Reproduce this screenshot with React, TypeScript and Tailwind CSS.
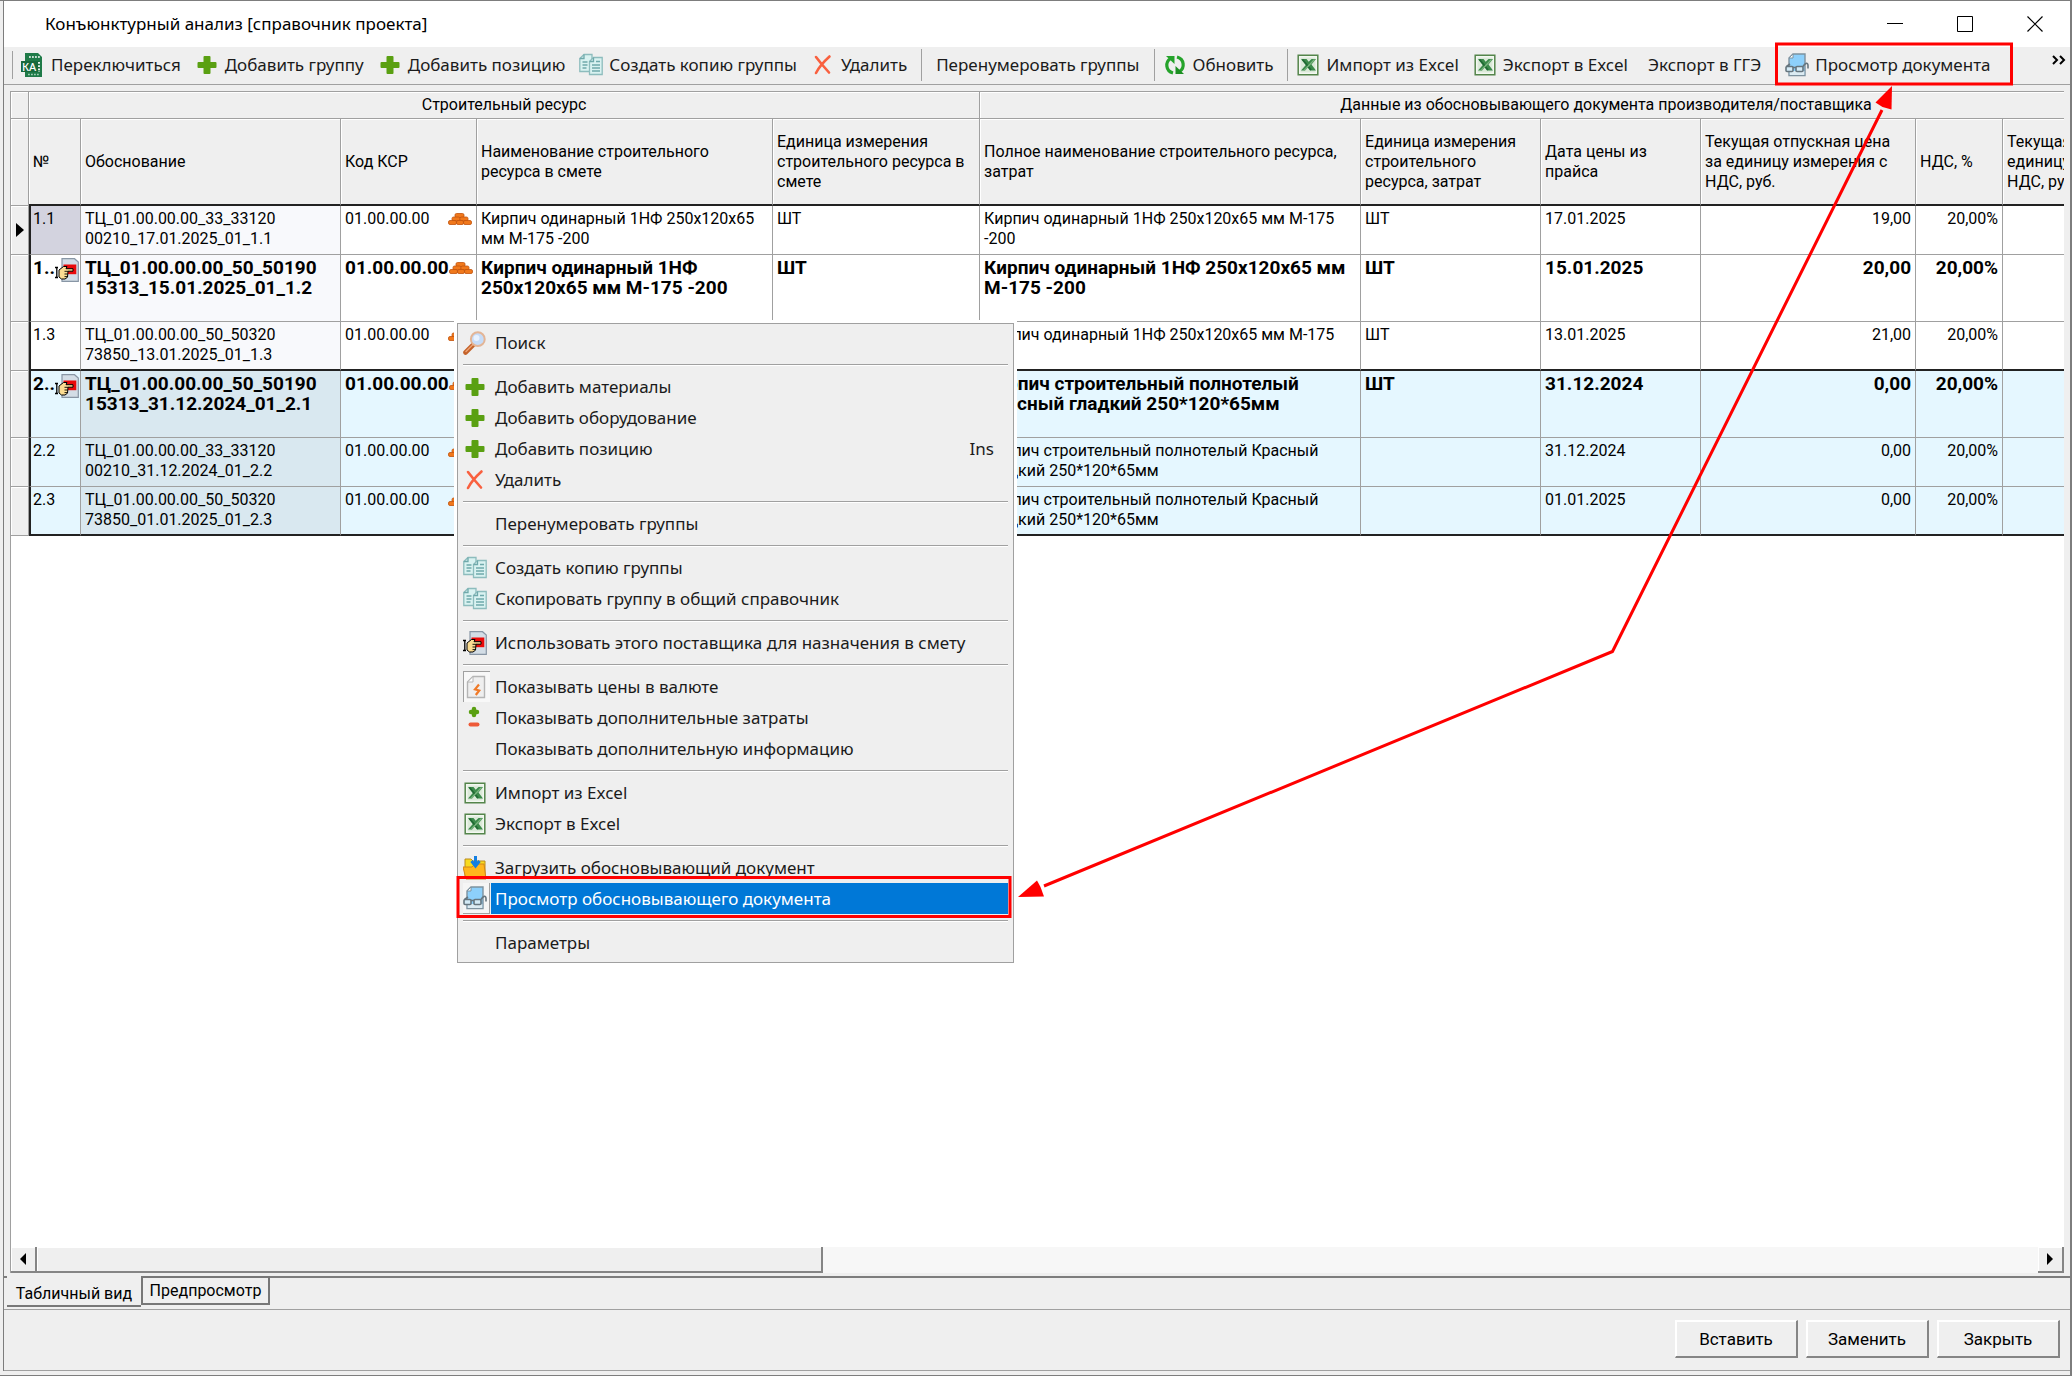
import React from 'react';

/* ---------- icons ---------- */

const icon = 'block w-6 h-6 shrink-0';

const SwitchIcon = () => (
  <svg viewBox="0 0 24 24" className={icon} aria-hidden="true">
    <path d="M4 0h13l4 4v20H4z" fill="#1f7a48" />
    <path d="M8 4h11" stroke="#fff" strokeWidth="1.6" strokeDasharray="1.8 1.2" />
    <path d="M7 21.5h11" stroke="#9fd0b5" strokeWidth="1.4" strokeDasharray="1.8 1.2" />
    <path d="M0 8h18v11H0z" fill="#17693c" />
    <text x="1" y="17.500" fontSize="11" fontWeight="500" fill="#fff">КА</text>
    <path d="M18 9v10" stroke="#fff" strokeWidth="1.800" strokeDasharray="1.800 1.400" />
  </svg>
);

const PlusIcon = () => (
  <svg viewBox="0 0 24 24" className={icon} aria-hidden="true">
    <path d="M9.5 3h5q1 0 1 1v5h5q1 0 1 1v4q0 1-1 1h-5v5q0 1-1 1h-5q-1 0-1-1v-5h-5q-1 0-1-1v-4q0-1 1-1h5V4q0-1 1-1z" fill="#5aa012" />
  </svg>
);

const CopyIcon = () => (
  <svg viewBox="0 0 24 24" className={icon} aria-hidden="true">
    <g fill="#d9f2f1" stroke="#8dbcbd" strokeWidth="1.3">
      <path d="M5 1.5h8v17H.8V5.5z" />
      <path d="M14.5 4.5h8.7v17H10.5V8.5z" />
    </g>
    <g fill="none" stroke="#6fa9ab" strokeWidth="1.3">
      <path d="M5 1.5v4H.8M14.5 4.5v4h-4" />
      <path d="M3.5 9h5M3.5 12h5M3.5 15h4M13 12h8M13 15h8M13 18h8M17 8.5h4" />
    </g>
  </svg>
);

const DeleteIcon = () => (
  <svg viewBox="0 0 24 24" className={icon} aria-hidden="true">
    <path d="M5 4c3 4 8 10 13 15.500M18.500 3.500C13 8.500 8 14 5 20" fill="none" stroke="#f9603f" strokeWidth="2.6" strokeLinecap="round" />
  </svg>
);

const RefreshIcon = () => (
  <svg viewBox="0 0 24 24" className={icon} aria-hidden="true">
    <g fill="none" stroke="#25a32b" strokeWidth="3.2">
      <path d="M10 20C2.500 18 2 9 7.500 5.500" />
      <path d="M14 4c7.500 2 8 11 2.500 14.500" />
    </g>
    <path d="M3 3h8.500v8z" fill="#25a32b" />
    <path d="M21 21h-8.500v-8z" fill="#1c8f22" />
  </svg>
);

const ExcelIcon = () => (
  <svg viewBox="0 0 24 24" className={icon} aria-hidden="true">
    <path d="M2.200 2.200h19.600v19.600H2.200z" fill="#f3f8f1" stroke="#54854b" strokeWidth="1.500" />
    <path d="M4.500 4.500h15v15h-15z" fill="#dbe9d8" />
    <path d="M5 6h5.500l2.200 2.800L15.500 6H20l-4.500 5.500L20 17.500h-6l-2.200-3-2.800 3H5l4.800-5.500z" fill="#3b8a4a" />
    <path d="M6.500 6.500 15 17" fill="none" stroke="#1f6a33" strokeWidth="1.800" />
    <path d="M18.500 6.500 8 17.500" fill="none" stroke="#7db681" strokeWidth="1.200" />
  </svg>
);

const PreviewIcon = () => (
  <svg viewBox="0 0 24 24" className={icon} aria-hidden="true">
    <path d="M8 1h12v21.500H4V5z" fill="#8dd0fb" stroke="#7e929f" strokeWidth="1.4" />
    <path d="M8 1v4H4z" fill="#fff" stroke="#7e929f" strokeWidth="1" />
    <path d="M4.700 18h14.600v4H4.700z" fill="#dcebf2" />
    <g fill="#d3eaf6" stroke="#66757e" strokeWidth="1.6">
      <rect x="1" y="13.500" width="7" height="5" rx="1" />
      <rect x="11" y="13.500" width="7" height="5" rx="1" />
    </g>
    <path d="M8 14.500h3M1.500 13.500 5 11M18 13.500c2-3.500 5-4.500 5-1v3" fill="none" stroke="#66757e" strokeWidth="1.6" />
  </svg>
);

const SearchIcon = () => (
  <svg viewBox="0 0 24 24" className={icon} aria-hidden="true">
    <path d="M10.500 13.500 2.500 21.500" stroke="#c4622a" strokeWidth="4.600" strokeLinecap="round" />
    <path d="M9.500 14 3 20.500" stroke="#eda173" strokeWidth="1.500" strokeLinecap="round" />
    <circle cx="14.800" cy="8.200" r="6.900" fill="#c6dcf8" stroke="#e3b596" strokeWidth="2" />
    <circle cx="13.500" cy="7" r="3" fill="#e8f2ff" />
  </svg>
);

const SupplierIcon = () => (
  <svg viewBox="0 0 24 24" className={icon} aria-hidden="true">
    <path d="M7 .7h12.500L23.300 4v19.300H7z" fill="#d3dde6" stroke="#8896a5" strokeWidth="1.200" />
    <path d="M8.500 6.500h12.800v9.700H8.500z" fill="#ea0a0a" />
    <path d="M0 9.500h3M0 19.500h3M1.800 9.500v10" fill="none" stroke="#000" strokeWidth="1.300" />
    <path d="M4 12 8.500 8.500H12l-1 2.200h7v2.500h-5l-.5 6L10 21H6.500L4 19z" fill="#fbdc92" stroke="#000" strokeWidth="1" />
    <path d="M9.500 13.300h3.500M9.500 16h3.200M9.500 18.600h2.800" stroke="#000" strokeWidth=".9" />
  </svg>
);

const CurrencyIcon = () => (
  <svg viewBox="0 0 24 24" className={icon} aria-hidden="true">
    <path d="M9 1.500h11.500v21h-17V7z" fill="#efefef" stroke="#b5b5b5" strokeWidth="1.400" />
    <path d="M9 1.500V7H3.500z" fill="#fff" stroke="#b5b5b5" strokeWidth="1" />
    <path d="M15 9.500 11 14.300l4.200 1.200-3.400 4.500" fill="none" stroke="#f07a28" strokeWidth="2.200" />
  </svg>
);

const PlusMinusIcon = () => (
  <svg viewBox="0 0 24 24" className={icon} aria-hidden="true">
    <path d="M11 3v6M8 6h6" stroke="#5aa012" strokeWidth="4.500" strokeLinecap="round" />
    <path d="M7.500 18.500h7" stroke="#ee5a38" strokeWidth="4" strokeLinecap="round" />
  </svg>
);

const LoadIcon = () => (
  <svg viewBox="0 0 24 24" className={icon} aria-hidden="true">
    <path d="M2 3h6l2 2h12v15H2z" fill="#f8dc1f" stroke="#b98a1e" strokeWidth="1" />
    <path d="M0 11h9l3-3h9l2 15H3z" fill="#ffb71c" stroke="#d2871a" strokeWidth="1" />
    <path d="M12.500 0v8M8.500 5l4 5 4-5" fill="none" stroke="#147fe0" strokeWidth="3" />
  </svg>
);

const BricksIcon = () => (
  <svg viewBox="0 0 24 12" className="block w-6 h-3 shrink-0" aria-hidden="true">
    <g fill="#f0781c" stroke="#c1530c" strokeWidth=".8">
      <rect x="7" y=".5" width="9" height="4" rx="1.500" />
      <rect x="4" y="4" width="8" height="4" rx="1.500" />
      <rect x="12" y="4" width="8" height="4" rx="1.500" />
      <rect x=".5" y="7.500" width="8" height="4" rx="1.500" />
      <rect x="8.500" y="7.500" width="7" height="4" rx="1.500" />
      <rect x="15.500" y="7.500" width="8" height="4" rx="1.500" />
    </g>
  </svg>
);

/* ---------- title bar ---------- */

const TitleBar = () => (
  <header className="flex h-[46px] items-center bg-white pb-px pl-[41px]">
    <h1 className="text-[17px] leading-6 text-black">Конъюнктурный анализ [справочник проекта]</h1>
    <div className="ml-auto flex h-full">
      <button type="button" aria-label="Свернуть" className="flex w-[70px] items-center justify-center">
        <svg viewBox="0 0 16 16" className="h-4 w-4"><path d="M0 7.500h16" stroke="#000" /></svg>
      </button>
      <button type="button" aria-label="Развернуть" className="flex w-[70px] items-center justify-center">
        <svg viewBox="0 0 16 16" className="h-4 w-4"><path d="M.5.5h15v15H.5z" fill="none" stroke="#000" /></svg>
      </button>
      <button type="button" aria-label="Закрыть окно" className="flex w-[70px] items-center justify-center">
        <svg viewBox="0 0 16 16" className="h-4 w-4"><path d="m.5.5 15 15m0-15-15 15" stroke="#000" strokeWidth="1.200" /></svg>
      </button>
    </div>
  </header>
);

/* ---------- toolbar ---------- */

type ToolProps = { label: string; children?: React.ReactNode };

const Tool = ({ label, children }: ToolProps) => (
  <button type="button" className="flex items-center gap-[6px] whitespace-nowrap pr-[14px]">
    {children}
    {label}
  </button>
);

const Divider = () => <span className="mr-2 h-8 w-px shrink-0 bg-[#a0a0a0]" />;

const Toolbar = () => (
  <nav className="flex h-[38px] items-center overflow-hidden border-b border-[#a0a0a0] bg-[#efefef] pb-[2px] pl-2 text-[17px] leading-6 text-[#1b1b1b]">
    <span className="mr-2 h-7 w-px shrink-0 bg-[#a0a0a0]" />
    <Tool label="Переключиться"><SwitchIcon /></Tool>
    <Tool label="Добавить группу"><PlusIcon /></Tool>
    <Tool label="Добавить позицию"><PlusIcon /></Tool>
    <Tool label="Создать копию группы"><CopyIcon /></Tool>
    <Tool label="Удалить"><DeleteIcon /></Tool>
    <Divider />
    <span className="w-[6px]" />
    <Tool label="Перенумеровать группы" />
    <Divider />
    <Tool label="Обновить"><RefreshIcon /></Tool>
    <Divider />
    <Tool label="Импорт из Excel"><ExcelIcon /></Tool>
    <Tool label="Экспорт в Excel"><ExcelIcon /></Tool>
    <span className="w-[6px]" />
    <Tool label="Экспорт в ГГЭ" />
    <span className="w-[10px]" />
    <Tool label="Просмотр документа"><PreviewIcon /></Tool>
    <button type="button" aria-label="Ещё" className="ml-auto self-start pr-1">
      <svg viewBox="0 0 14 10" className="mt-2 h-[10px] w-[14px]"><path d="m1 1 4 4-4 4M8 1l4 4-4 4" fill="none" stroke="#000" strokeWidth="2" /></svg>
    </button>
  </nav>
);

/* ---------- table ---------- */

type Row = {
  no: string;
  code: string[];
  name: string[];
  full: string[];
  date: string;
  price: string;
  main?: boolean;
  unit?: string;
};

const groups: Row[][] = [
  [
    { no: '1.1', code: ['ТЦ_01.00.00.00_33_33120', '00210_17.01.2025_01_1.1'], name: ['Кирпич одинарный 1НФ 250х120х65', 'мм М-175 -200'], full: ['Кирпич одинарный 1НФ 250х120х65 мм М-175', '-200'], date: '17.01.2025', price: '19,00', unit: 'ШТ' },
    { no: '1..', code: ['ТЦ_01.00.00.00_50_50190', '15313_15.01.2025_01_1.2'], name: ['Кирпич одинарный 1НФ', '250х120х65 мм М-175 -200'], full: ['Кирпич одинарный 1НФ 250х120х65 мм', 'М-175 -200'], date: '15.01.2025', price: '20,00', unit: 'ШТ', main: true },
    { no: '1.3', code: ['ТЦ_01.00.00.00_50_50320', '73850_13.01.2025_01_1.3'], name: [], full: ['Кирпич одинарный 1НФ 250х120х65 мм М-175'], date: '13.01.2025', price: '21,00', unit: 'ШТ' },
  ],
  [
    { no: '2..', code: ['ТЦ_01.00.00.00_50_50190', '15313_31.12.2024_01_2.1'], name: [], full: ['Кирпич строительный полнотелый', 'Красный гладкий 250*120*65мм'], date: '31.12.2024', price: '0,00', unit: 'ШТ', main: true },
    { no: '2.2', code: ['ТЦ_01.00.00.00_33_33120', '00210_31.12.2024_01_2.2'], name: [], full: ['Кирпич строительный полнотелый Красный', 'гладкий 250*120*65мм'], date: '31.12.2024', price: '0,00' },
    { no: '2.3', code: ['ТЦ_01.00.00.00_50_50320', '73850_01.01.2025_01_2.3'], name: [], full: ['Кирпич строительный полнотелый Красный', 'гладкий 250*120*65мм'], date: '01.01.2025', price: '0,00' },
  ],
];

const columns = [
  ['№'],
  ['Обоснование'],
  ['Код КСР'],
  ['Наименование строительного', 'ресурса в смете'],
  ['Единица измерения', 'строительного ресурса в', 'смете'],
  ['Полное наименование строительного ресурса,', 'затрат'],
  ['Единица измерения', 'строительного', 'ресурса, затрат'],
  ['Дата цены из', 'прайса'],
  ['Текущая отпускная цена', 'за единицу измерения с', 'НДС, руб.'],
  ['НДС, %'],
  ['Текущая', 'единицу', 'НДС, руб.'],
];

const Lines = ({ items }: { items: string[] }) => (
  <>
    {items.map((line) => (
      <span key={line} className="block">{line}</span>
    ))}
  </>
);

const head = 'overflow-hidden border-r border-b border-[#a0a0a0] bg-[#efefef] px-1 font-normal shadow-[inset_1px_1px_0_#fff]';
const cell = 'overflow-hidden border-r border-b border-[#a0a0a0] px-1 pt-[3px] align-top';

const TableRow = ({ row, last, blue, current }: { row: Row; last: boolean; blue: boolean; current: boolean }) => {
  const edge = last ? ' border-b-2 border-b-[#222]' : '';
  const td = cell + edge;
  return (
    <tr className={(blue ? 'bg-[#e5f7ff] ' : 'bg-white ') + (row.main ? 'h-[67px] text-[19px] font-bold' : 'h-[49px]')}>
      <td className="border-r border-b border-[#a0a0a0] bg-[#efefef] shadow-[inset_1px_1px_0_#fff]">
        {current && (
          <svg viewBox="0 0 8 14" className="mx-auto h-[14px] w-2"><path d="M0 0l8 7-8 7z" fill="#000" /></svg>
        )}
      </td>
      <td className={td + ' border-l-2 border-l-[#222] pr-[3px] pl-[2px]' + (current ? ' bg-[#d3d3df]' : '')}>
        <div className="flex">
          {row.no}
          {row.main && <SupplierIcon />}
        </div>
      </td>
      <td className={td + (blue ? ' bg-[#d9e8f0]' : ' bg-[#f8f9fc]')}><Lines items={row.code} /></td>
      <td className={td}>
        <div className="flex items-center justify-between">
          01.00.00.00
          <BricksIcon />
        </div>
      </td>
      <td className={td}><Lines items={row.name} /></td>
      <td className={td}>{row.name.length > 0 && row.unit}</td>
      <td className={td}><Lines items={row.full} /></td>
      <td className={td}>{row.unit}</td>
      <td className={td}>{row.date}</td>
      <td className={td + ' text-right'}>{row.price}</td>
      <td className={td + ' text-right'}>20,00%</td>
      <td className={td + ' border-r-0'} />
    </tr>
  );
};

const ResourceTable = () => (
  <table className="w-[2221px] table-fixed border-separate border-spacing-0 text-[16px] leading-5 whitespace-nowrap text-black">
    <colgroup>
      <col className="w-[18px]" />
      <col className="w-[52px]" />
      <col className="w-[260px]" />
      <col className="w-[136px]" />
      <col className="w-[296px]" />
      <col className="w-[207px]" />
      <col className="w-[381px]" />
      <col className="w-[180px]" />
      <col className="w-[160px]" />
      <col className="w-[215px]" />
      <col className="w-[87px]" />
      <col />
    </colgroup>
    <thead className="text-left">
      <tr className="h-[27px]">
        <th className={head} />
        <th colSpan={5} className={head + ' text-center'}>Строительный ресурс</th>
        <th colSpan={6} className={head + ' border-r-0 text-center'}>Данные из обосновывающего документа производителя/поставщика</th>
      </tr>
      <tr className="h-[87px]">
        <th className={head} />
        {columns.map((lines) => (
          <th key={lines.join(' ')} className={head + ' border-b-2 border-b-[#222] last:border-r-0'}>
            <Lines items={lines} />
          </th>
        ))}
      </tr>
    </thead>
    <tbody>
      {groups.map((rows, g) =>
        rows.map((row, i) => (
          <TableRow key={row.no} row={row} last={i === rows.length - 1} blue={g === 1} current={g === 0 && i === 0} />
        )),
      )}
    </tbody>
  </table>
);

/* ---------- scrollbar, tabs, footer ---------- */

const raised = 'border-r-2 border-b-2 border-[#858585] bg-[#efefef] shadow-[inset_1px_1px_0_#fff]';

const ScrollBar = () => (
  <div className="flex h-[26px] bg-[#f7f7f7]">
    <button type="button" aria-label="Влево" className={raised + ' flex w-[26px] items-center justify-center'}>
      <svg viewBox="0 0 6 12" className="h-3 w-[6px]"><path d="M6 0v12L0 6z" fill="#000" /></svg>
    </button>
    <div className={raised + ' w-[38.3%]'} />
    <button type="button" aria-label="Вправо" className={raised + ' ml-auto flex w-[26px] items-center justify-center'}>
      <svg viewBox="0 0 6 12" className="h-3 w-[6px]"><path d="M0 0v12l6-6z" fill="#000" /></svg>
    </button>
  </div>
);

const Tabs = () => (
  <div role="tablist" className="flex h-[31px] items-start bg-[#efefef] pl-[3px] text-[16px] leading-5 text-black">
    <button type="button" role="tab" aria-selected="true" className="-mt-[2px] h-[31px] w-[134px] border-b-2 border-[#777] bg-[#efefef] pt-[6px]">
      Табличный вид
    </button>
    <button type="button" role="tab" aria-selected="false" className="-mt-[2px] h-[29px] w-[129px] border-2 border-[#777] bg-[#efefef]">
      Предпросмотр
    </button>
  </div>
);

const FooterButton = ({ label }: { label: string }) => (
  <button type="button" className={raised + ' h-[38px] w-[123px] border-t border-l border-t-white border-l-white'}>
    {label}
  </button>
);

const Footer = () => (
  <footer className="flex h-[62px] justify-end gap-2 border-t border-b border-[#a0a0a0] bg-[#efefef] pt-[10px] pr-[10px] text-[17px] leading-5 text-black">
    <FooterButton label="Вставить" />
    <FooterButton label="Заменить" />
    <FooterButton label="Закрыть" />
  </footer>
);

/* ---------- context menu ---------- */

type ItemProps = { label: string; hotkey?: string; selected?: boolean; checked?: boolean; children?: React.ReactNode };

const Item = ({ label, hotkey, selected, checked, children }: ItemProps) => (
  <button type="button" role="menuitem" className="flex h-[31px] w-full text-left">
    <span
      className={
        'flex w-[27px] items-center ' +
        (selected ? 'border-r border-b border-[#a0a0a0] bg-[#f5f5f5]' : checked ? 'border-t border-l border-[#a0a0a0] bg-[#f8f8f8]' : '')
      }
    >
      {children}
    </span>
    <span className={'ml-px flex h-full grow items-center justify-between pr-[14px] pl-1 ' + (selected ? 'bg-[#0078d7] text-white' : '')}>
      <span>{label}</span>
      {hotkey && <span>{hotkey}</span>}
    </span>
  </button>
);

const Separator = () => (
  <div role="separator" className="flex h-[13px] items-center">
    <span className="h-[2px] grow border-t border-[#a0a0a0] bg-white" />
  </div>
);

const ContextMenu = () => (
  <div role="menu" className="absolute top-[319px] left-[454px] w-[563px] border-[3px] border-white">
    <div className="border border-[#a0a0a0] bg-[#efefef] px-[5px] pt-[3px] pb-1 text-[17px] leading-6 text-[#1b1b1b]">
      <Item label="Поиск"><SearchIcon /></Item>
      <Separator />
      <Item label="Добавить материалы"><PlusIcon /></Item>
      <Item label="Добавить оборудование"><PlusIcon /></Item>
      <Item label="Добавить позицию" hotkey="Ins"><PlusIcon /></Item>
      <Item label="Удалить"><DeleteIcon /></Item>
      <Separator />
      <Item label="Перенумеровать группы" />
      <Separator />
      <Item label="Создать копию группы"><CopyIcon /></Item>
      <Item label="Скопировать группу в общий справочник"><CopyIcon /></Item>
      <Separator />
      <Item label="Использовать этого поставщика для назначения в смету"><SupplierIcon /></Item>
      <Separator />
      <Item label="Показывать цены в валюте" checked><CurrencyIcon /></Item>
      <Item label="Показывать дополнительные затраты"><PlusMinusIcon /></Item>
      <Item label="Показывать дополнительную информацию" />
      <Separator />
      <Item label="Импорт из Excel"><ExcelIcon /></Item>
      <Item label="Экспорт в Excel"><ExcelIcon /></Item>
      <Separator />
      <Item label="Загрузить обосновывающий документ"><LoadIcon /></Item>
      <Item label="Просмотр обосновывающего документа" selected><PreviewIcon /></Item>
      <Separator />
      <Item label="Параметры" />
    </div>
  </div>
);

/* red frames and the two-headed arrow that links them */
const Callout = () => (
  <svg className="pointer-events-none absolute inset-0 h-full w-full" aria-hidden="true">
    <g fill="none" stroke="#f00" strokeWidth="3">
      <rect x="1776.500" y="43" width="235" height="40" />
      <rect x="458" y="876.500" width="552" height="39" />
      <path d="M1882 109 1612.500 650.500 1044 885" strokeLinejoin="round" />
    </g>
    <path d="M1892 85 1891.500 108.500 1882.500 106 1875.500 101.500z" fill="#f00" />
    <path d="M1018 896 1037 879.500 1040.500 886 1044 895.500z" fill="#f00" />
  </svg>
);

export default function App() {
  return (
    <div className="relative flex min-h-screen flex-col overflow-hidden border-t border-r-2 border-b border-[#7d7d7d] bg-[#efefef] pb-1 pl-[3px] font-['Noto_Sans',sans-serif]">
      <div className="flex grow flex-col border-l border-[#7d7d7d]">
        <TitleBar />
        <Toolbar />
        <main className="flex grow flex-col font-[Roboto,sans-serif]">
          <div className="flex grow flex-col border-b-2 border-[#7d7d7d] pt-[6px] pr-[6px] pb-[3px] pl-[6px]">
            <div className="flex min-w-0 grow flex-col border-t border-l border-[#a0a0a0] bg-white">
              <div className="overflow-hidden">
                <ResourceTable />
              </div>
              <div className="mt-auto">
                <ScrollBar />
              </div>
            </div>
          </div>
          <Tabs />
          <Footer />
        </main>
      </div>
      <ContextMenu />
      <Callout />
    </div>
  );
}
